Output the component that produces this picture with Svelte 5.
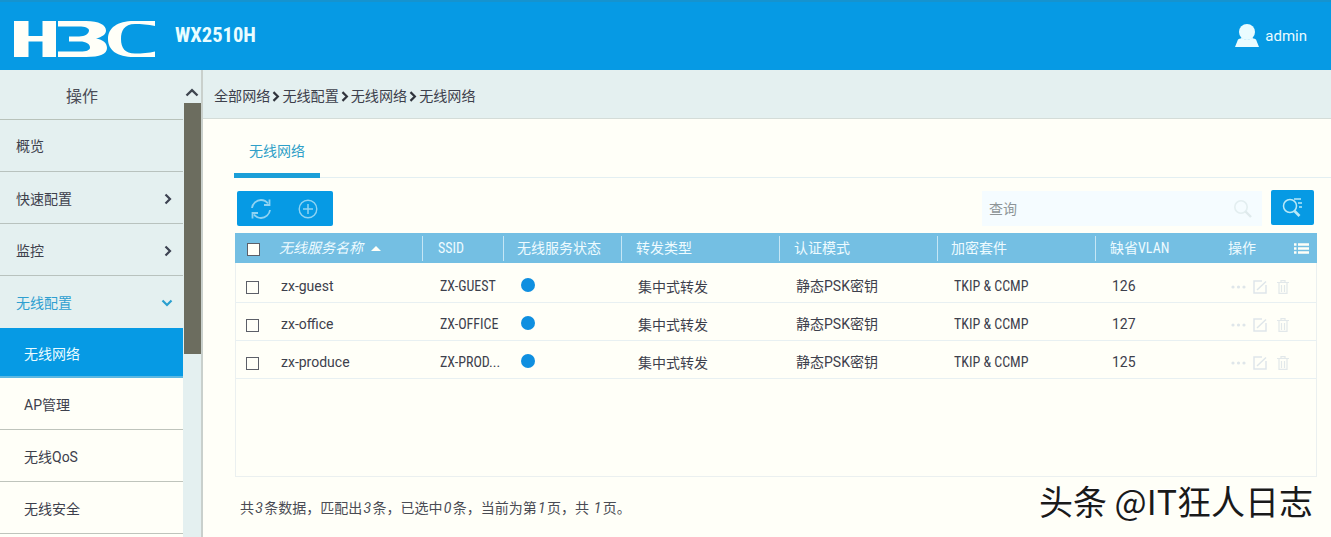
<script>
  const menu = [
    { label: '概览', arrow: '' },
    { label: '快速配置', arrow: 'right' },
    { label: '监控', arrow: 'right' },
    { label: '无线配置', arrow: 'down', open: true }
  ];
  const subs = [
    { label: '无线网络', active: true },
    { label: 'AP管理' },
    { label: '无线QoS' },
    { label: '无线安全' }
  ];
  const crumbs = ['全部网络', '无线配置', '无线网络', '无线网络'];
  const rows = [
    { name: 'zx-guest', ssid: 'ZX-GUEST', vlan: '126' },
    { name: 'zx-office', ssid: 'ZX-OFFICE', vlan: '127' },
    { name: 'zx-produce', ssid: 'ZX-PROD...', vlan: '125' }
  ];
</script>

<div class="page">
  <header class="top">
    <svg class="logo" viewBox="0 0 142 37" width="142" height="37" aria-label="H3C">
      <path d="M0 0H14.500V15H28.500V0H42V36H28.500V20.500H14.500V36H0Z" fill="#fffff8" />
      <path d="M44 0H72C85 0 92 4 92 9.500C92 13.500 88 16 82 17.500C89 18.500 93 22 93 27C93 33 86 36 72 36H44V30.500H66C73 30.500 76 29 76 26.500C76 23 72 20.500 66 20.500H55V15.500H65C71 15.500 75 12.500 75 9.500C75 7 71 5.500 65 5.500H44Z" fill="#fffff8" />
      <path d="M141 0V5C134 3.500 127 3 121 3C110 3 107 10 107 18C107 27 111 32.500 121 32.500C128 32.500 135 32 141 30.500V36H120C103 36 94 29 94 18C94 7 103 0 120 0Z" fill="#fffff8" />
    </svg>
    <span class="model">WX2510H</span>
    <div class="user">
      <svg viewBox="0 0 24 23" width="24" height="23">
        <circle cx="12" cy="8" r="8" fill="#eafcff" />
        <path d="M0 23L3 15.500C5 14.500 6.500 14 7.500 14C9 16 15 16 16.500 14C17.500 14 19 14.500 21 15.500L24 23Z" fill="#eafcff" />
      </svg>
      <span>admin</span>
    </div>
  </header>

  <div class="body">
    <aside class="side">
      <nav class="nav">
        <div class="nav-title">操作</div>
        {#each menu as m}
          <div class="item" class:open={m.open} class:right={m.arrow === 'right'}>
            <span>{m.label}</span>
            {#if m.arrow === 'right'}
              <svg class="chev" viewBox="0 0 8 12" width="8" height="12"><path d="M1.500 1.500L6 6L1.500 10.500" fill="none" stroke="#3d4252" stroke-width="2.200" /></svg>
            {:else if m.arrow === 'down'}
              <svg class="chev-down" viewBox="0 0 12 8" width="12" height="8"><path d="M1.500 1.500L6 6L10.500 1.500" fill="none" stroke="#2a9fcf" stroke-width="2.200" /></svg>
            {/if}
          </div>
        {/each}
        {#each subs as s}
          <div class="sub" class:active={s.active}>{s.label}</div>
        {/each}
      </nav>
      <div class="scroll">
        <svg class="scroll-up" viewBox="0 0 14 9" width="14" height="9"><path d="M1.500 7.500L7 2.200L12.500 7.500" fill="none" stroke="#3f4650" stroke-width="2.400" /></svg>
        <div class="thumb"></div>
      </div>
    </aside>

    <main class="main">
      <div class="crumbs">
        {#each crumbs as c, i}
          {#if i > 0}
            <svg viewBox="0 0 7 10" width="8" height="11"><path d="M1.200 1L5.200 5L1.200 9" fill="none" stroke="#30343c" stroke-width="2" /></svg>
          {/if}
          <span>{c}</span>
        {/each}
      </div>

      <div class="tabs"><div class="tab">无线网络</div></div>

      <div class="content">
        <div class="toolbar">
          <div class="tool-btns">
            <svg viewBox="0 0 22 22" width="22" height="22">
              <path d="M2 10C2.500 5.500 6.500 2 11 2C14 2 16.500 3.500 18 5.500M20 12C19.500 16.500 15.500 20 11 20C8 20 5.500 18.500 4 16.500" fill="none" stroke="#8fd3f2" stroke-width="1.800" />
              <path d="M19.500 1.500V7H14M2.500 20.500V15H8" fill="none" stroke="#8fd3f2" stroke-width="1.800" />
            </svg>
            <svg viewBox="0 0 20 20" width="20" height="20">
              <circle cx="10" cy="10" r="8.800" fill="none" stroke="#8fd3f2" stroke-width="1.400" />
              <path d="M10 5V15M5 10H15" stroke="#8fd3f2" stroke-width="1.500" />
            </svg>
          </div>
          <div class="search">
            <span>查询</span>
            <svg viewBox="0 0 20 20" width="20" height="20">
              <circle cx="8" cy="8" r="6.200" fill="none" stroke="#e3eef0" stroke-width="1.600" />
              <path d="M12.500 12.500L18 18" stroke="#dfeaec" stroke-width="2.400" />
            </svg>
          </div>
          <div class="search-btn">
            <svg viewBox="0 0 22 22" width="22" height="22">
              <circle cx="8" cy="9" r="6.500" fill="none" stroke="#b9e8f7" stroke-width="1.500" />
              <path d="M12.500 14L17.500 19" stroke="#b9e8f7" stroke-width="2.600" />
              <path d="M12 2H19M16 6H20M17 10H20" stroke="#b9e8f7" stroke-width="1.300" />
            </svg>
          </div>
        </div>

        <div class="table">
          <div class="row head">
            <div class="c-check"><i class="box white"></i></div>
            <div class="cell name sort">无线服务名称 <b class="tri"></b></div>
            <div class="cell ssid narrow">SSID</div>
            <div class="cell state">无线服务状态</div>
            <div class="cell type">转发类型</div>
            <div class="cell auth">认证模式</div>
            <div class="cell enc">加密套件</div>
            <div class="cell vlan narrow">缺省VLAN</div>
            <div class="cell op">
              <span>操作</span>
              <svg viewBox="0 0 15 11" width="15" height="11">
                <path d="M0 1.500H2.500M4 1.500H15M0 5.500H2.500M4 5.500H15M0 9.500H2.500M4 9.500H15" stroke="#fffff8" stroke-width="2.300" />
              </svg>
            </div>
          </div>
          {#each rows as r}
            <div class="row">
              <div class="c-check"><i class="box"></i></div>
              <div class="cell name">{r.name}</div>
              <div class="cell ssid narrow">{r.ssid}</div>
              <div class="cell state"><i class="dot"></i></div>
              <div class="cell type low">集中式转发</div>
              <div class="cell auth">静态PSK密钥</div>
              <div class="cell enc narrow">TKIP &amp; CCMP</div>
              <div class="cell vlan">{r.vlan}</div>
              <div class="cell op icons">
                <svg viewBox="0 0 15 4" width="15" height="4"><g fill="#dfe6ea"><circle cx="2" cy="2" r="1.600" /><circle cx="7.500" cy="2" r="1.600" /><circle cx="13" cy="2" r="1.600" /></g></svg>
                <svg viewBox="0 0 14 14" width="14" height="14"><path d="M13 5V13H1V1H9" fill="none" stroke="#dfe6ea" stroke-width="1.500" /><path d="M4 10L13 1.500" stroke="#dfe6ea" stroke-width="1.500" /></svg>
                <svg viewBox="0 0 12 14" width="12" height="14"><path d="M0 2.500H12M4 2V.7H8V2M2 3V13.300H10V3M4.500 5V12M7.500 5V12" fill="none" stroke="#e2e8ea" stroke-width="1.200" /></svg>
              </div>
            </div>
          {/each}
        </div>

        <p class="foot">共<em>3</em>条数据，匹配出<em>3</em>条，已选中<em>0</em>条，当前为第<em>1</em>页，共 <em>1</em>页。</p>
      </div>
    </main>
  </div>

  <div class="mark">头条 @IT狂人日志</div>
</div>

<style>
  :global(body) {
    margin: 0;
    background: #fffff8;
  }
  .page {
    position: relative;
    width: 1331px;
    height: 537px;
    overflow: hidden;
    background: #fffff8;
    color: #3d404c;
    font: 14px/1.2 Roboto, "Noto Sans CJK SC", sans-serif;
  }
  .top {
    height: 70px;
    box-sizing: border-box;
    display: flex;
    align-items: center;
    background: #069ae4;
    border-top: 2px solid #1593cf;
    padding: 0 24px 2px 14px;
    color: #eafcff;
  }
  .logo {
    display: block;
    margin-top: 9px;
  }
  .model {
    margin-left: 19px;
    font: 700 20.5px/1 "Roboto Condensed", Roboto, sans-serif;
    color: #e9fdff;
  }
  .user {
    margin-left: auto;
    display: flex;
    align-items: center;
    gap: 6px;
    font-size: 15px;
  }
  .user span {
    padding-top: 2px;
  }
  .body {
    display: flex;
    height: 467px;
  }
  .side {
    width: 203px;
    flex: none;
    display: flex;
    box-sizing: border-box;
    border-right: 2px solid #c9d0cc;
  }
  .nav {
    width: 183px;
    flex: none;
  }
  .nav-title {
    height: 49px;
    line-height: 53px;
    padding-right: 19px;
    text-align: center;
    font-size: 16px;
    background: #e4f0f0;
    border-bottom: 1px solid #b8c2ba;
    color: #4a4c56;
  }
  .item {
    height: 51px;
    display: flex;
    align-items: center;
    justify-content: space-between;
    padding: 0 11px 0 16px;
    background: #e4f0f0;
    border-bottom: 1px solid #b8c2be;
  }
  .item span {
    padding-top: 1px;
  }
  .item.right span {
    padding-top: 3px;
  }
  .item.open span {
    padding-top: 2px;
  }
  .item.open {
    color: #2f9fd0;
    border-bottom: 0;
    height: 52px;
  }
  .chev {
    margin-top: 3px;
  }
  .chev-down {
    margin: 1px -1px 0 0;
  }
  .sub {
    height: 51px;
    line-height: 54px;
    padding-left: 24px;
    background: #fffff8;
    border-bottom: 1px solid #bfc4bc;
  }
  .sub.active {
    height: 48px;
    line-height: 52px;
    background: #069ae4;
    color: #eafcff;
    border-bottom: 2px solid #5cb8e2;
  }
  .scroll {
    flex: 1;
    background: #e4f0f0;
    display: flex;
    flex-direction: column;
    align-items: center;
  }
  .scroll-up {
    margin-top: 18px;
  }
  .thumb {
    width: 17px;
    height: 251px;
    margin-top: 6px;
    background: #6c6d5f;
  }
  .main {
    flex: 1;
    min-width: 0;
  }
  .crumbs {
    height: 49px;
    box-sizing: border-box;
    display: flex;
    align-items: center;
    gap: 1px;
    padding: 5px 0 0 11px;
    font-size: 14.1px;
    background: #e4f0f0;
    border-bottom: 1px solid #d4dcd8;
  }
  .crumbs svg {
    margin: 0 1px;
  }
  .tabs {
    height: 59px;
    box-sizing: border-box;
    margin: 0 0 0 31px;
    display: flex;
    align-items: flex-end;
    border-bottom: 1px solid #e3eff2;
  }
  .tab {
    width: 86px;
    height: 47px;
    box-sizing: border-box;
    padding: 12px 0 0 15px;
    margin-bottom: -1px;
    color: #2f9fc8;
    border-bottom: 5px solid #1b9fd8;
  }
  .content {
    padding: 13px 14px 0 32px;
  }
  .toolbar {
    display: flex;
    align-items: flex-start;
    padding: 0 3px 0 2px;
    height: 42px;
  }
  .tool-btns {
    width: 96px;
    height: 35px;
    box-sizing: border-box;
    display: flex;
    align-items: center;
    gap: 26px;
    padding: 0 0 0 13px;
    background: #069ae4;
    border-radius: 2px;
  }
  .search {
    margin-left: auto;
    width: 280px;
    height: 35px;
    box-sizing: border-box;
    display: flex;
    align-items: center;
    justify-content: space-between;
    padding: 1px 9px 0 7px;
    background: #f5fcff;
    color: #8e9598;
  }
  .search-btn {
    margin: -1px 0 0 9px;
    width: 43px;
    height: 35px;
    display: flex;
    align-items: center;
    justify-content: center;
    background: #069ae4;
    border-radius: 2px;
  }
  .table {
    height: 244px;
    box-sizing: border-box;
    border: 1px solid #ebf0f0;
    border-top: 0;
    display: flex;
    flex-direction: column;
  }
  .row {
    height: 38px;
    flex: none;
    box-sizing: border-box;
    display: flex;
    align-items: center;
    padding-top: 6px;
    border-bottom: 1px solid #e8f0f2;
  }
  .row.head {
    height: 30px;
    margin: 0 -1px;
    padding-top: 0;
    background: #74bfe3;
    color: #eefbff;
    border-bottom: 0;
  }
  .row.head + .row {
    height: 40px;
    padding-top: 8px;
  }
  .c-check {
    width: 44px;
    flex: none;
    padding-left: 10px;
    box-sizing: border-box;
  }
  .head .c-check {
    padding-left: 12px;
    padding-top: 2px;
  }
  .row:not(.head) .box {
    margin-top: 2px;
  }
  .box {
    display: block;
    width: 13px;
    height: 13px;
    box-sizing: border-box;
    border: 1px solid #5c5f68;
    background: #fffff8;
  }
  .cell {
    flex: none;
    box-sizing: border-box;
    white-space: nowrap;
  }
  .narrow {
    font-family: "Roboto Condensed", Roboto, "Noto Sans CJK SC", sans-serif;
    font-size: 14px;
  }
  .head .cell {
    height: 25px;
    line-height: 25px;
    border-right: 1px solid #c5e6f5;
  }
  .head .op,
  .head .vlan {
    border-right: 0;
  }
  .name { width: 144px; padding-left: 1px; }
  .ssid { width: 81px; padding-left: 16px; }
  .state { width: 118px; padding-left: 16px; }
  .type { width: 158px; padding-left: 15px; }
  .auth { width: 158px; padding-left: 15px; }
  .enc { width: 158px; padding-left: 15px; }
  .vlan { width: 117px; padding-left: 15px; }
  .head .name { padding-left: 0; }
  .head .ssid { padding-left: 15px; }
  .head .state { padding-left: 13px; }
  .head .type { padding-left: 14px; }
  .head .auth { padding-left: 14px; }
  .head .enc { padding-left: 13px; }
  .head .vlan { padding-left: 14px; }
  .op {
    flex: 1;
    display: flex;
    align-items: center;
    padding-left: 15px;
  }
  .sort {
    font-style: italic;
  }
  .tri {
    display: inline-block;
    width: 0;
    height: 0;
    margin: 0 0 2px 5px;
    border: 5px solid transparent;
    border-top: 0;
    border-bottom: 5px solid #fffff8;
  }
  .head .op svg {
    margin-left: 38px;
  }
  .dot {
    display: block;
    width: 14px;
    height: 14px;
    margin: -3px 0 0 0;
    border-radius: 50%;
    background: #0f8fe0;
  }
  .low {
    padding-top: 2px;
  }
  .icons {
    gap: 7px;
    padding-left: 17px;
  }
  .icons svg:last-child {
    margin-left: 3px;
  }
  .foot {
    margin: 23px 0 0 5px;
    font-size: 14px;
    color: #4a4c54;
    line-height: 17px;
  }
  .foot em {
    font-style: italic;
    padding: 0 1.300px;
  }
  .mark {
    position: absolute;
    right: 18px;
    top: 481px;
    font: 34px/40px "Noto Sans CJK SC", sans-serif;
    color: #1a1a1a;
    white-space: nowrap;
    text-shadow: 1px 1px 0 #fff, -1px -1px 0 #fff;
  }
</style>
